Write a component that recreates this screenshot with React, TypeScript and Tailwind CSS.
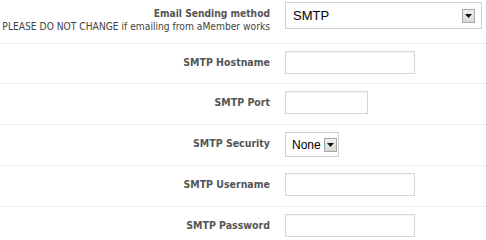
import React from "react";

const labelFont = { fontFamily: '"DejaVu Sans Condensed", "DejaVu Sans", sans-serif' };

function Arrow() {
  return (
    <span className="flex h-[14px] w-[13px] items-center justify-center border border-[#a6a6a6] bg-gradient-to-b from-[#f0f0f0] to-[#d8d8d8]">
      <svg width="7" height="4" viewBox="0 0 7 4">
        <path d="M0 0H7L3.5 4Z" fill="#111" />
      </svg>
    </span>
  );
}

function TextInput({ w }: { w: string }) {
  return <div className={`${w} h-[23px] border border-[#d6d6d6] bg-white shadow-[inset_0_1px_1px_rgba(0,0,0,0.05)]`} />;
}

function Row({ label, children, h }: { label: string; children: React.ReactNode; h: string }) {
  return (
    <div className={`grid grid-cols-[270px_1fr] gap-x-[15px] border-b border-[#eeeeee] pt-[7px] ${h}`}>
      <div className="text-right text-[10.5px] font-bold leading-[23px] text-[#555]" style={labelFont}>
        {label}
      </div>
      <div>{children}</div>
    </div>
  );
}

export default function App() {
  return (
    <div className="w-[486px] h-[240px] overflow-hidden bg-white">
      <div className="grid h-[44px] grid-cols-[270px_1fr] gap-x-[15px] border-b border-[#eeeeee]">
        <div className="pt-[7px] text-right text-[10.2px] leading-[13px] text-[#444] whitespace-nowrap" style={labelFont}>
          <div className="font-bold text-[10.2px] text-[#555]">Email Sending method</div>
          <div>PLEASE DO NOT CHANGE if emailing from aMember works</div>
        </div>
        <div className="pt-[2px]">
          <div className="flex h-[27px] w-[197px] items-center justify-between border border-[#d0d0d0] bg-white pl-[7px] pr-[6px]">
            <span className="text-[13px] text-black" style={{ fontFamily: '"Liberation Sans", Arial, sans-serif' }}>
              SMTP
            </span>
            <Arrow />
          </div>
        </div>
      </div>
      <Row label="SMTP Hostname" h="h-[40px]">
        <TextInput w="w-[130px]" />
      </Row>
      <Row label="SMTP Port" h="h-[41px]">
        <TextInput w="w-[83px]" />
      </Row>
      <Row label="SMTP Security" h="h-[41px]">
        <div className="flex h-[25px] w-[54px] items-center gap-[3px] border border-[#d0d0d0] bg-white pl-[6px]">
          <span className="text-[12px] text-black" style={{ fontFamily: '"Liberation Sans", Arial, sans-serif' }}>
            None
          </span>
          <Arrow />
        </div>
      </Row>
      <Row label="SMTP Username" h="h-[41px]">
        <TextInput w="w-[130px]" />
      </Row>
      <Row label="SMTP Password" h="h-[41px]">
        <TextInput w="w-[130px]" />
      </Row>
    </div>
  );
}
